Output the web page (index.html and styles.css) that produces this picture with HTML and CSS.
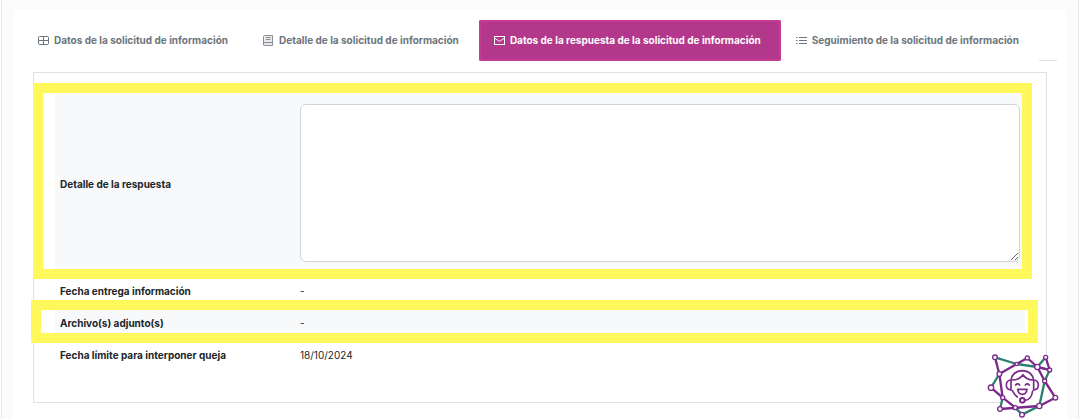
FILE: index.html
```html
<!DOCTYPE html>
<html lang="es">
<head>
<meta charset="utf-8">
<meta name="viewport" content="width=device-width, initial-scale=1">
<title>Solicitud de información</title>
<link rel="stylesheet" href="styles.css">
</head>
<body>
<div class="frame">
  <main class="card">
    <nav class="tabs" role="tablist">
      <button class="tab" type="button" role="tab">
        <svg class="icon" viewBox="0 0 11 11" fill="none" stroke="currentColor"><rect x=".5" y="1.500" width="10" height="8" rx="1"/><path d="M5.500 1.500v8M.5 5.500h10"/></svg>
        Datos de la solicitud de información
      </button>
      <button class="tab" type="button" role="tab">
        <svg class="icon" viewBox="0 0 11 11" fill="none" stroke="currentColor" stroke-width=".8"><path fill="#6c757d" fill-opacity=".15" d="M1.500.5h8v10h-8q-1 0-1-1v-8q0-1 1-1z"/><path d="M.5 9q0-1.500 1.500-1.500h7.500M3 2.500h4.500M3 4.500h4.500"/></svg>
        Detalle de la solicitud de información
      </button>
      <button class="tab tab-active" type="button" role="tab" aria-selected="true">
        <svg class="icon" viewBox="0 0 11 11" fill="none" stroke="currentColor"><rect x=".5" y="1.500" width="10" height="8"/><path d="M.5 3 4.500 5.800q1 .6 2 0L10.500 3"/></svg>
        Datos de la respuesta de la solicitud de información
      </button>
      <button class="tab" type="button" role="tab">
        <svg class="icon" viewBox="0 0 11 11" fill="none" stroke="currentColor"><path d="M0 2.500h1.500M3 2.500h8M0 5.500h1.500M3 5.500h8M0 8.500h1.500M3 8.500h8"/></svg>
        Seguimiento de la solicitud de información
      </button>
      <span class="tabs-rest"></span>
    </nav>
    <section class="panel">
      <table class="details">
        <tr class="shaded marked marked-answer">
          <th scope="row"><label for="respuesta">Detalle de la respuesta</label></th>
          <td><textarea id="respuesta" class="answer"></textarea></td>
        </tr>
        <tr>
          <th scope="row">Fecha entrega información</th>
          <td>-</td>
        </tr>
        <tr class="shaded marked marked-files">
          <th scope="row">Archivo(s) adjunto(s)</th>
          <td>-</td>
        </tr>
        <tr>
          <th scope="row">Fecha límite para interponer queja</th>
          <td>18/10/2024</td>
        </tr>
      </table>
    </section>
  </main>
</div>
<button class="assistant" type="button" aria-label="Asistente">
  <svg viewBox="0 0 270 222" fill="none" stroke="#7b2a8b" stroke-width="7" stroke-linecap="round" stroke-linejoin="round">
    <path fill="#fff" stroke="none" d="M45 37 110 57 142 39 172 66 197 37 209 75 194 108 226 158 178 183 126 209 106 188 60 192 68 158 33 128 58 87z"/>
    <path stroke="#2c7f72" d="M45 37 110 57 172 66 197 37M209 75 194 108 178 183 126 209M58 87 33 128M68 158 60 192M106 188 126 209"/>
    <path d="M45 37 58 87 68 158 106 188M58 87 110 57 142 39 172 66 209 75 197 37M172 66 194 108 226 158 178 183 60 192M33 128 68 158"/>
    <g fill="#fff" stroke-width="4"><circle cx="45" cy="37" r="7"/><circle cx="110" cy="57" r="5"/><circle cx="142" cy="39" r="6"/><circle cx="172" cy="66" r="8"/><circle cx="197" cy="37" r="6"/><circle cx="209" cy="75" r="6"/><circle cx="194" cy="108" r="6"/><circle cx="226" cy="158" r="7"/><circle cx="178" cy="183" r="8"/><circle cx="126" cy="209" r="7"/><circle cx="106" cy="188" r="6"/><circle cx="60" cy="192" r="7"/><circle cx="68" cy="158" r="6"/><circle cx="33" cy="128" r="8"/><circle cx="58" cy="87" r="7"/></g>
    <path stroke-width="5" d="M93 112v-6q4-28 34-29 30 1 34 29v6M93 105q-14 1-14 15t14 15zM161 105q14 1 14 15t-14 15zM97 137q6 12 15 19M158 138q-4 27-23 28M96 105q22 0 33-16 10 15 29 16"/>
    <path stroke-width="5" d="M107 120q6-7 12 0M136 120q6-7 12 0M113 133h28q-2 15-14 15t-14-15z"/>
    <circle cx="127" cy="166" r="7" stroke-width="6" fill="#fff"/>
  </svg>
</button>
</body>
</html>
```
FILE: styles.css
```css
* { box-sizing: border-box; }

body {
  margin: 0;
  background: #fff;
  color: #212529;
  font: 10px/16px Inter, "Liberation Sans", sans-serif;
}

.frame {
  min-height: 100vh;
  margin-left: 1px;
  padding: 10px 11px 0;
  background: #fbfbfb;
  border: solid #e9e9eb;
  border-width: 0 1px;
  display: flex;
}

.card {
  flex: 1;
  min-width: 0;
  padding: 10px 10px 16px;
  background: #fff;
}

.tabs { display: flex; }

.tab {
  flex: 1 0 auto;
  display: flex;
  align-items: center;
  justify-content: flex-start;
  gap: 5px;
  height: 41px;
  padding: 0 13px 1px 15px;
  border: 0;
  border-radius: 2px;
  background: none;
  color: #6c757d;
  font: 700 10px/16px Inter, "Liberation Sans", sans-serif;
  white-space: nowrap;
}

.tab-active {
  background: #b3388b;
  box-shadow: inset 0 0 0 2px #c43c94;
  color: #fff;
}

.icon { width: 11px; height: 11px; flex: none; }

.tabs-rest { flex: none; width: 18px; border-bottom: 1px solid #dee2e6; }

.panel {
  margin: 11px 10px 0;
  padding: 20px 21px 31px;
  border: 1px solid #dee2e6;
}

.details { width: 100%; border-collapse: collapse; }

.details th,
.details td {
  height: 32px;
  padding: 0 5px;
  text-align: left;
}

.details th { width: 240px; font-weight: 700; }

.shaded { background: #f8f9fb; }

.answer {
  display: block;
  width: 100%;
  height: 158px;
  margin: 11px 0 13px;
  border: 1px solid #ced4da;
  border-radius: 6px;
  background: #fff;
  font: inherit;
  resize: vertical;
}

.marked { position: relative; }

.marked::after {
  content: "";
  position: absolute;
  border: 10px solid #fff85a;
  pointer-events: none;
}

.marked-answer::after { inset: -10px -7px -4px -22px; }
.marked-files::after { inset: -7px -13px -4px -24px; }

.assistant {
  position: fixed;
  right: 9px;
  bottom: 0;
  width: 90px;
  height: 74px;
  padding: 0;
  border: 0;
  background: none;
}

.assistant svg { display: block; width: 100%; height: 100%; }
```
